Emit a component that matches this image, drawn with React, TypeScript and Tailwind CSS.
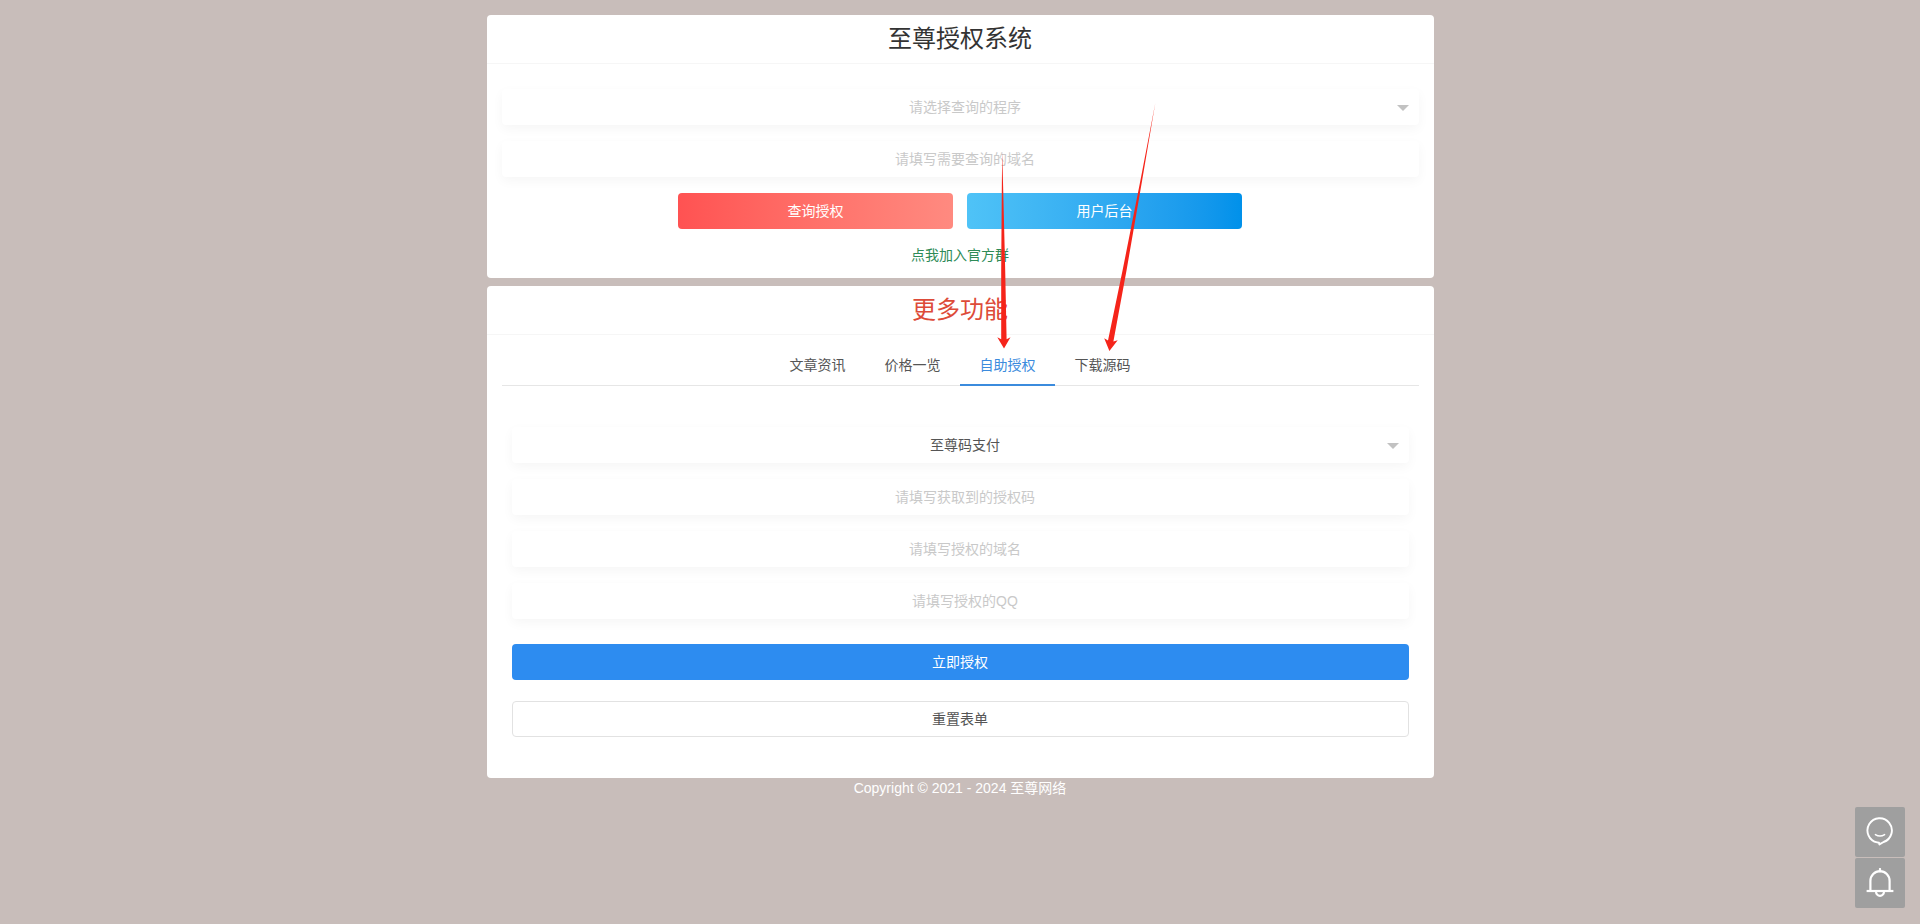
import type { ReactNode } from "react";

const fieldClass =
  "block h-9 w-full appearance-none rounded bg-white pl-[10px] text-center text-sm text-[#555] shadow-[0_4px_12px_0_rgba(0,0,0,0.04)] outline-none placeholder:text-[#c9c9c9]";

function Card({ title, titleClass, children }: { title: string; titleClass: string; children: ReactNode }) {
  return (
    <section className="rounded bg-white">
      <h2 className={`h-[49px] border-b border-[#f6f6f6] text-center text-2xl leading-[48px] font-normal ${titleClass}`}>
        {title}
      </h2>
      {children}
    </section>
  );
}

function SelectField({ label, tone, options }: { label: string; tone: string; options: string[] }) {
  return (
    <div className="relative">
      <select aria-label={label} className={`${fieldClass} ${tone}`}>
        {options.map((o) => (
          <option key={o}>{o}</option>
        ))}
      </select>
      <svg className="pointer-events-none absolute top-4 right-[10px] h-[6px] w-3" viewBox="0 0 12 6" aria-hidden="true">
        <path d="M0 0h12L6 6z" fill="#c2c2c2" />
      </svg>
    </div>
  );
}

function TextField({ label }: { label: string }) {
  return <input type="text" aria-label={label} placeholder={label} className={fieldClass} />;
}

const tabs = ["文章资讯", "价格一览", "自助授权", "下载源码"];

export default function App() {
  return (
    <div className="min-h-screen bg-[#c8bdba] pt-[15px] font-['Liberation_Sans','Noto_Sans_CJK_SC',sans-serif] text-sm text-[#555]">
      <main className="relative mx-auto flex max-w-[947px] flex-col gap-2">
        <Card title="至尊授权系统" titleClass="text-[#333]">
          <form className="flex flex-col gap-4 px-[15px] pt-[25px] pb-3" onSubmit={(e) => e.preventDefault()}>
            <SelectField label="查询的程序" tone="text-[#c9c9c9]" options={["请选择查询的程序", "至尊码支付"]} />
            <TextField label="请填写需要查询的域名" />
            <div className="flex justify-center gap-[14px]">
              <button type="submit" className="h-9 w-[275px] rounded bg-linear-to-r from-[#ff5252] to-[#ff8a80] text-white">
                查询授权
              </button>
              <button type="button" className="h-9 w-[275px] rounded bg-linear-to-r from-[#4fc3f7] to-[#0091ea] text-white">
                用户后台
              </button>
            </div>
            <a href="#group" className="self-center leading-[21px] text-[#2e8b57]">
              点我加入官方群
            </a>
          </form>
        </Card>

        <Card title="更多功能" titleClass="text-[#dd4b39]">
          <div className="px-[15px] pt-[10px] pb-[41px]">
            <div role="tablist" className="flex h-[41px] justify-center border-b border-[#e6e6e6]">
              {tabs.map((t) => (
                <button
                  key={t}
                  type="button"
                  role="tab"
                  aria-selected={t === "自助授权"}
                  className="-mb-px w-[95px] border-b-2 border-transparent aria-selected:border-[#3b8bdd] aria-selected:text-[#3b8bdd]"
                >
                  {t}
                </button>
              ))}
            </div>
            <form className="px-[10px] pt-[41px]" onSubmit={(e) => e.preventDefault()}>
              <div className="flex flex-col gap-4">
                <SelectField label="授权的程序" tone="text-[#555]" options={["至尊码支付"]} />
                <TextField label="请填写获取到的授权码" />
                <TextField label="请填写授权的域名" />
                <TextField label="请填写授权的QQ" />
              </div>
              <div className="mt-[25px] flex flex-col gap-[21px]">
                <button type="submit" className="h-9 rounded bg-[#2d8cf0] text-white">
                  立即授权
                </button>
                <button type="reset" className="h-9 rounded border border-[#e2e2e2] bg-white">
                  重置表单
                </button>
              </div>
            </form>
          </div>
        </Card>

        <svg
          className="pointer-events-none absolute top-[75px] left-[503px] h-[270px] w-[180px]"
          viewBox="990 90 180 270"
          fill="#f5241a"
          aria-hidden="true"
        >
          <path d="M1002.2 152L1003.2 190L1005.2 270L1006.6 339.2L1010.5 337.3L1004 348.5L997.3 337.3L1001.2 339.2L1001.2 270L1001.8 190Z" />
          <path d="M1155.3 103L1142.2 180L1126.6 270L1113.4 341.5L1117.7 340.3L1109.4 351L1104.2 338.2L1108 340.4L1122.8 269.3L1140.5 180Z" />
        </svg>
      </main>

      <footer className="text-center leading-[21px] text-white">Copyright © 2021 - 2024 至尊网络</footer>

      <div className="fixed right-[15px] bottom-4 flex flex-col gap-px">
        <button type="button" aria-label="客服" className="grid size-[50px] place-items-center rounded-xs bg-[#9f9f9f]">
          <svg className="size-[30px]" viewBox="0 0 30 30" fill="none" stroke="#fff" strokeWidth="1.9" strokeLinecap="round" strokeLinejoin="round" aria-hidden="true">
            <path d="M12.2 25.4A12.2 12.2 0 1 1 18.6 25L14.4 27.4L14 25.8Z" />
            <path d="M10.4 17.6Q15 20.6 19.6 17.6" strokeWidth="1.5" />
          </svg>
        </button>
        <button type="button" aria-label="公告" className="grid size-[50px] place-items-center rounded-xs bg-[#9f9f9f]">
          <svg className="size-[30px]" viewBox="0 0 30 30" fill="none" stroke="#fff" strokeWidth="2.2" aria-hidden="true">
            <path d="M1.6 23H28.4" />
            <path d="M5.4 23V13A9.6 9.8 0 0 1 24.6 13V23" />
            <path d="M15 1V3.4" strokeLinecap="round" />
            <path d="M11 23.6A4 4.2 0 0 0 19 23.6" />
          </svg>
        </button>
      </div>
    </div>
  );
}
